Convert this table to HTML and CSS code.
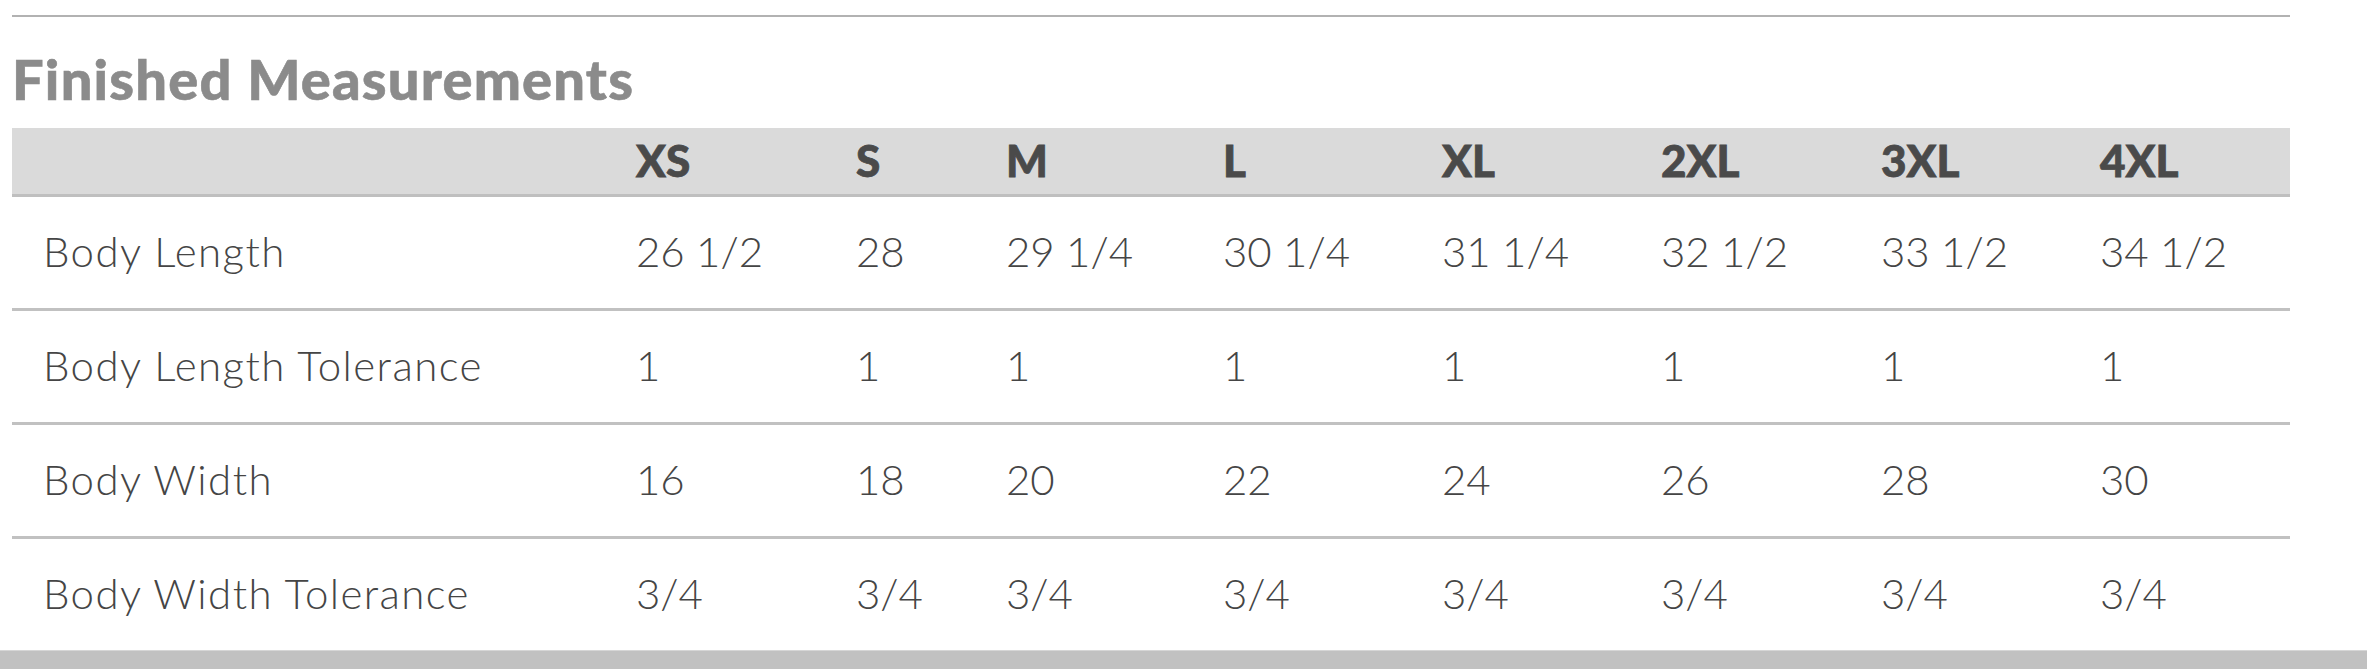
FILE: index.html
```html
<!DOCTYPE html>
<html lang="en">
<head>
<meta charset="utf-8">
<title>Finished Measurements</title>
<link rel="stylesheet" href="styles.css">
</head>
<body>
<section class="section">
  <h2 class="title">Finished Measurements</h2>
  <table class="sizes">
    <colgroup>
      <col class="c-label"><col class="c-xs"><col class="c-s"><col class="c-m"><col class="c-l"><col class="c-xl"><col class="c-2xl"><col class="c-3xl"><col class="c-4xl">
    </colgroup>
    <thead>
      <tr><th class="label"></th><th>XS</th><th>S</th><th>M</th><th>L</th><th>XL</th><th>2XL</th><th>3XL</th><th>4XL</th></tr>
    </thead>
    <tbody>
      <tr><td class="label">Body Length</td><td>26 1/2</td><td>28</td><td>29 1/4</td><td>30 1/4</td><td>31 1/4</td><td>32 1/2</td><td>33 1/2</td><td>34 1/2</td></tr>
      <tr><td class="label">Body Length Tolerance</td><td>1</td><td>1</td><td>1</td><td>1</td><td>1</td><td>1</td><td>1</td><td>1</td></tr>
      <tr><td class="label">Body Width</td><td>16</td><td>18</td><td>20</td><td>22</td><td>24</td><td>26</td><td>28</td><td>30</td></tr>
      <tr><td class="label">Body Width Tolerance</td><td>3/4</td><td>3/4</td><td>3/4</td><td>3/4</td><td>3/4</td><td>3/4</td><td>3/4</td><td>3/4</td></tr>
    </tbody>
  </table>
</section>
<div class="footer-bar"></div>
</body>
</html>
```

FILE: styles.css
```css
html, body {
  margin: 0;
  padding: 0;
  background: #ffffff;
}

body {
  font-family: Lato, "Open Sans", "Liberation Sans", sans-serif;
  overflow: hidden;
}

.section {
  margin: 15px 0 0 12px;
  width: 2278px;
  border-top: 2px solid #b2b2b2;
}

.title {
  margin: 28px 0 16px;
  font-size: 56px;
  line-height: 67px;
  font-weight: 900;
  letter-spacing: 1.2px;
  -webkit-text-stroke: 0.6px #8b8b8b;
  color: #8b8b8b;
}

.sizes {
  width: 2278px;
  table-layout: fixed;
  border-collapse: separate;
  border-spacing: 0;
}

.c-label { width: 624px; }
.c-xs { width: 220px; }
.c-s { width: 150px; }
.c-m { width: 217px; }
.c-l { width: 219px; }
.c-xl { width: 219px; }
.c-2xl { width: 220px; }
.c-3xl { width: 219px; }
.c-4xl { width: 190px; }

.sizes th {
  background: #dadada;
  border-bottom: 3px solid #bfbfbf;
  padding: 0 0 2px 0;
  line-height: 64px;
  text-align: left;
  font-size: 44px;
  font-weight: 900;
  color: #4a4a4a;
  -webkit-text-stroke: 0.8px #4a4a4a;
  white-space: nowrap;
}

.sizes td {
  border-bottom: 3px solid #c1c1c1;
  padding: 0 0 3px 0;
  line-height: 108px;
  text-align: left;
  font-size: 42px;
  font-weight: 300;
  color: #454545;
  white-space: nowrap;
}

.sizes tbody tr:last-child td {
  border-bottom: none;
}

.sizes td.label {
  padding-left: 31px;
  letter-spacing: 1.4px;
}

.sizes th.label {
  padding-left: 31px;
}

.footer-bar {
  height: 18px;
  border-top: 1px solid #d6d6d6;
  background: #c1c1c1;
}
```
